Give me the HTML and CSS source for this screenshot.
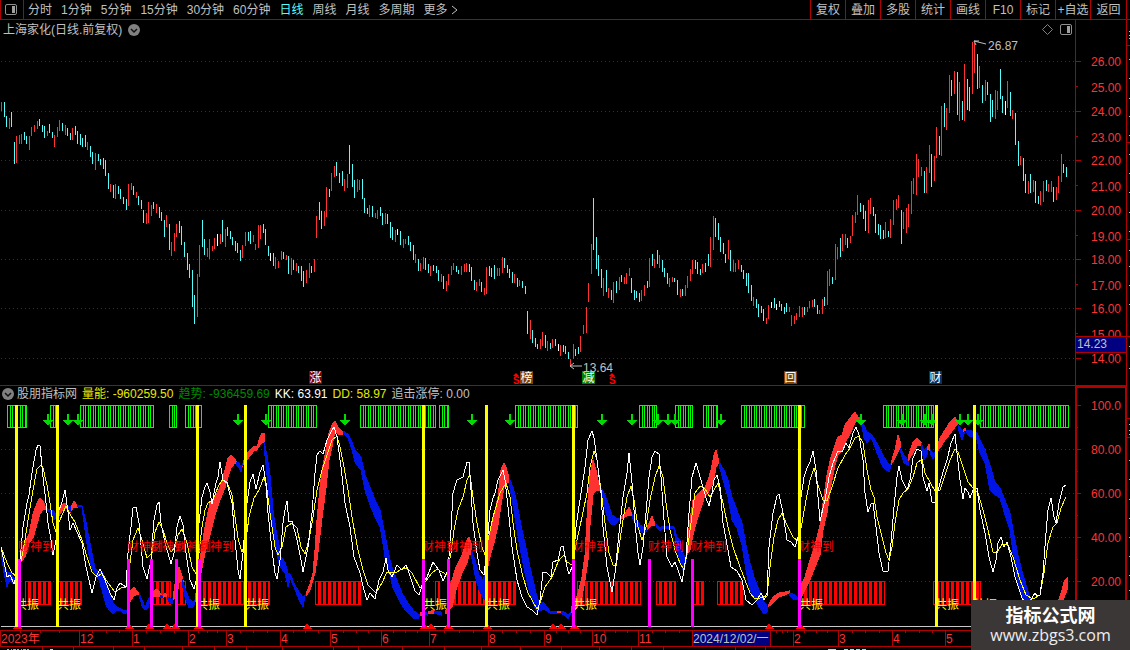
FILE: index.html
```html
<!DOCTYPE html>
<html lang="zh-CN">
<head>
<meta charset="utf-8">
<title>上海家化 日线</title>
<link rel="stylesheet" href="styles.css">
</head>
<body>
<div class="app">
  <header class="toolbar">
    <button class="layout-btn" aria-label="布局">
      <svg width="14" height="12" viewBox="0 0 14 12"><rect x="1.500" y=".5" width="11" height="10" rx="1.500" fill="none" stroke="#909090"/><rect x="8" y="2" width="3" height="7" fill="#a0a0a0"/></svg>
    </button>
    <nav class="periods">
      <button>分时</button><button>1分钟</button><button>5分钟</button><button>15分钟</button><button>30分钟</button><button>60分钟</button><button class="active">日线</button><button>周线</button><button>月线</button><button>多周期</button><button class="more">更多<svg width="7" height="10" viewBox="0 0 7 10"><path d="M1 1l5 4-5 4" fill="none" stroke="#c0c0c0"/></svg></button>
    </nav>
    <div class="tools">
      <button>复权</button><button>叠加</button><button>多股</button><button>统计</button><button>画线</button><button>F10</button><button>标记</button><button>+自选</button><button class="back">返回</button>
    </div>
  </header>
  <div class="body">
    <main class="charts">
      <div class="price-title">
        <div class="name">
          <span>上海家化(日线.前复权)</span>
          <button class="round" aria-label="展开"><svg width="12" height="12" viewBox="0 0 12 12"><circle cx="6" cy="6" r="6" fill="#808080"/><path d="M3 5l3 3 3-3" fill="none" stroke="#101010" stroke-width="1.5"/></svg></button>
        </div>
        <div class="marks">
          <svg width="11" height="11" viewBox="0 0 11 11"><path d="M5.500 .5l5 5-5 5-5-5z" fill="none" stroke="#808080"/></svg>
          <svg width="12" height="11" viewBox="0 0 12 11"><rect x=".5" y=".5" width="11" height="10" rx="1.500" fill="none" stroke="#909090"/><rect x="7" y="2" width="3" height="7" fill="#a0a0a0"/></svg>
        </div>
        <div class="axis-head"></div>
      </div>
      <svg id="price" class="plot" viewBox="0 39 1127 347"></svg>
      <div class="legend">
        <button class="round" aria-label="展开"><svg width="12" height="12" viewBox="0 0 12 12"><circle cx="6" cy="6" r="6" fill="#808080"/><path d="M3 5l3 3 3-3" fill="none" stroke="#101010" stroke-width="1.5"/></svg></button>
        <div class="values">
          <span class="c-gray">股朋指标网</span>
          <span class="c-yellow">量能: -960259.50</span>
          <span class="c-green">趋势: -936459.69</span>
          <span class="c-white">KK: 63.91</span>
          <span class="c-yellow">DD: 58.97</span>
          <span class="c-gray">追击涨停: 0.00</span>
        </div>
        <div class="axis-head thick"></div>
      </div>
      <svg id="osc" class="plot" viewBox="0 403 1127 227"></svg>
      <svg id="dates" class="plot" viewBox="0 630 1127 20"></svg>
    </main>
    <svg id="edge" class="edge" viewBox="1127 20 3 630"></svg>
  </div>
  <div class="site"><strong>指标公式网</strong><span>www.zbgs3.com</span></div>
</div>
<script src="chart.js"></script>
</body>
</html>
```
FILE: styles.css
```css
* { box-sizing: border-box; }
body {
  margin: 0;
  background: #000;
  color: #c0c0c0;
  font: 12px/16px "Liberation Sans", "Noto Sans CJK SC", sans-serif;
}
button {
  margin: 0;
  padding: 0;
  border: 0;
  background: none;
  color: inherit;
  font: inherit;
  white-space: nowrap;
}
svg { display: block; }
.app { position: relative; overflow: hidden; min-height: 100vh; }
.toolbar {
  display: flex;
  height: 20px;
  border-bottom: 1px solid #b00000;
  border-left: 1px solid #b00000;
}
.layout-btn { width: 23px; padding-left: 3px; border-right: 1px solid #b00000; }
.periods { display: flex; gap: 9px; padding-left: 4px; flex: 1; }
.periods .active { color: #54fcfc; }
.periods .more { display: flex; align-items: center; gap: 3px; }
.tools { display: flex; margin-right: 3px; border-right: 1px solid #b00000; }
.tools button { width: 35px; border-left: 1px solid #b00000; }
.tools .back { width: 36px; }
.body { display: grid; grid-template-columns: 1fr 3px; }
.price-title { display: flex; height: 19px; }
.name { display: flex; flex: 1; align-items: center; gap: 6px; padding-left: 3px; }
.marks { display: flex; align-items: center; gap: 7px; padding-right: 3px; }
.axis-head { width: 52px; border-left: 1px solid #b00000; border-right: 1px solid #b00000; }
.axis-head.thick { border-width: 2px; border-top: 2px solid #b00000; }
.round { width: 12px; height: 12px; }
.legend { display: flex; height: 17px; }
.legend .round { margin: 2px 3px 0 2px; }
.values { display: flex; flex: 1; gap: 5px; white-space: nowrap; }
.c-gray { color: #c0c0c0; }
.c-yellow { color: #e8e800; }
.c-green { color: #008a00; }
.c-white { color: #fff; }
.plot { width: 100%; height: auto; overflow: visible; }
.plot text { font-size: 12px; }
.edge { width: 3px; height: 630px; }
.crisp { shape-rendering: crispEdges; }
.site {
  position: absolute;
  right: 0;
  bottom: 0;
  display: flex;
  flex-direction: column;
  align-items: center;
  width: 159px;
  height: 50px;
  padding-top: 3px;
  background: #3c3737;
  color: #fff;
  font: 16px/20px "Open Sans", "Noto Sans CJK SC", sans-serif;
}
.site strong { font: bold 18px/22px "Noto Sans CJK SC", sans-serif; }
.site span { color: #eee; }
```
FILE: chart.js
```js
const RED = '#ff3232', CYAN = '#54fcfc', LINE = '#b00000';
const hline = (x1, x2, y, c, w = 1) => `<rect class="crisp" x="${x1}" y="${y}" width="${x2 - x1}" height="${w}" fill="${c}"/>`;
const vline = (x, y1, y2, c, w = 1) => `<rect class="crisp" x="${x}" y="${y1}" width="${w}" height="${y2 - y1}" fill="${c}"/>`;
const text = (x, y, s, c) => `<text x="${x}" y="${y}" fill="${c}">${s}</text>`;
const grid = y => `<path class="crisp" d="M1 ${y + 0.5}H1075" stroke="#a00000" stroke-dasharray="1 3"/>`;

/* Daily bars: x, high, low, direction (r up, c down, w flat) */
const bars = `1,102,111r 4,102,117c 6,116,127c 9,118,129r 11,112,127c 14,142,164c 16,136,163r 19,135,144r 21,134,144r 24,132,140c 26,136,144c 29,136,150r 31,127,136r 34,125,132r 37,121,129r 39,119,126c 42,125,132c 44,126,138c 47,131,136r 49,124,133c 52,132,138c 54,135,147r 57,127,137r 59,120,131r 62,123,131c 65,125,135r 67,128,136c 70,133,140c 72,128,140r 75,126,135c 77,131,144c 80,134,145c 82,138,147c 85,135,147c 87,142,150r 90,146,157c 92,152,164c 95,153,170r 98,154,161c 100,159,165c 103,158,169c 105,160,176c 108,173,189c 110,184,192r 113,185,198c 115,184,199r 118,186,194c 120,189,199c 123,197,204c 126,199,210c 128,184,206r 131,183,190r 133,186,195c 136,192,198r 138,196,205c 141,200,209c 143,210,223c 146,213,224r 148,202,223r 151,205,216r 153,202,209c 156,204,213r 159,207,218c 161,212,221c 164,220,237c 166,215,227r 169,224,250c 171,242,256r 174,233,251r 176,224,237r 179,221,233c 181,226,245c 184,242,257c 187,253,270c 189,264,278c 192,270,307c 194,295,324c 197,274,317r 199,245,277r 202,220,247c 204,239,255c 207,248,257r 209,239,259r 212,246,251r 214,238,249r 217,234,246w 220,234,244r 222,220,242c 225,229,247r 227,227,236c 230,231,239c 232,237,245c 235,241,251c 237,243,253c 240,250,261c 242,245,258r 245,232,246r 248,232,241c 250,231,244c 253,235,242r 255,244,250r 258,225,248r 260,225,239r 263,224,233c 265,229,245c 268,246,256c 270,253,261w 273,253,266c 275,257,269r 278,261,268r 281,251,260r 283,252,259c 286,255,260r 288,256,274c 291,258,275r 293,260,270c 296,263,271r 298,266,273c 301,266,281c 303,271,287c 306,270,283r 309,263,278r 311,266,273c 314,259,272r 316,216,238r 319,202,220c 321,211,229c 324,211,226r 326,187,217r
329,189,197c 331,173,191r 334,166,177r 336,162,176c 339,173,183c 342,171,186c 344,179,191r 347,174,188r 349,145,174c 352,164,187c 354,180,198c 357,179,192r 359,180,190r 362,179,199c 364,198,213c 367,208,214c 369,205,217r 372,206,217c 375,213,218r 377,210,219r 380,207,216c 382,213,225c 385,213,224r 387,214,224c 390,222,238c 392,227,240c 395,230,242r 397,229,235w 400,231,245c 403,239,248r 405,239,244r 408,236,245c 410,242,251c 413,245,260c 415,254,263r 418,259,271c 420,263,271r 423,257,269r 425,258,270c 428,264,273c 430,266,276r 433,265,271c 436,266,273c 438,270,281c 441,274,282r 443,276,289c 446,281,291r 448,274,285r 451,266,275r 453,263,270r 456,266,272c 458,270,274c 461,266,275r 464,264,272r 466,263,272r 469,264,272c 471,267,281c 474,280,290c 476,282,291r 479,279,286r 481,282,292c 484,288,295r 486,267,294r 489,266,276c 491,268,277c 494,265,279c 497,268,276r 499,268,276r 502,257,273r 504,258,268c 507,265,273c 509,269,278c 512,272,283c 514,274,283r 517,278,287c 519,280,286r 522,281,288c 525,286,294c 527,311,334c 530,320,339r 532,330,343c 535,338,347c 537,344,349c 540,339,349r 542,332,346r 545,335,348c 547,341,351r 550,343,349c 552,339,348r 555,339,346c 558,344,351w 560,345,356r 563,345,352c 565,346,354c 568,352,359c 570,359,366r 573,344,359r 575,349,356c 578,347,354c 580,336,352r 583,325,334r 586,307,333r 588,283,302r 591,244,274r 593,198,250c 596,237,269c 598,255,276c
601,269,288c 603,278,296r 606,270,292c 608,288,298r 611,290,300c 613,282,303r 616,281,293c 619,277,290r 621,275,282c 624,277,284r 626,273,284r 629,268,276r 631,278,293c 634,290,300c 636,291,298c 639,293,302c 641,290,301r 644,285,296r 647,281,288c 649,258,287r 652,254,266c 654,259,268r 657,250,264c 659,255,268r 662,260,272c 664,268,277c 667,273,284c 669,278,287r 672,277,282r 674,278,282c 677,280,295c 680,289,297r 682,289,296c 685,285,296r 687,276,288r 690,269,281r 692,260,274r 695,260,269c 697,262,274c 700,269,275c 702,264,273r 705,263,272c 708,254,266c 710,237,267r 713,216,250r 715,218,237c 718,223,240c 720,237,252c 723,243,254c 725,254,263c 728,240,259r 730,250,271c 733,260,272r 735,263,272r 738,260,269r 741,265,272c 743,270,279c 746,273,286c 748,273,293c 751,285,301c 753,297,306r 756,299,308c 758,304,317c 761,306,313c 763,309,321c 766,318,324r 768,305,319r 771,302,308w 774,298,308c 776,304,310w 779,301,307c 781,304,311c 784,307,314c 786,303,312c 789,307,312r 791,315,326r 794,316,324r 796,313,320r 799,306,317r 802,307,317r 804,307,315c 807,307,312r 809,301,308r 812,300,307r 814,299,307c 817,305,314c 819,310,314r 822,299,314r 824,297,306c 827,271,305r 829,269,286r 832,277,284c 835,244,280r 837,247,259r 840,238,257c 842,234,251r 845,234,245r 847,238,248c 850,236,243r 852,215,236r
855,212,223r 857,195,215r 860,203,212c 863,205,219c 865,211,231c 868,200,233r 870,198,214r 873,207,216c 875,214,233c 878,224,235c 880,225,239c 883,230,239c 885,222,238r 888,231,237c 890,219,238r 893,200,225r 896,199,210r 898,195,208r 901,210,244c 903,212,229r 906,208,233r 908,204,227r 911,181,214r 913,178,194r 916,154,195r 918,159,177r 921,167,176r 924,171,193c 926,167,193r 929,145,173r 931,154,187c 934,156,181r 936,127,158r 939,136,155c 941,106,156r 944,103,127c 946,108,130r 949,75,113r 951,80,96c 954,71,94r 957,72,115c 959,82,121r 962,101,120c 964,64,121r 967,79,110c 969,87,111c 972,42,94r 974,43,73r 977,54,89c 979,66,88r 982,85,103c 985,80,101r 987,82,95c 990,94,122c 992,100,117c 995,90,119r 997,91,110r 1000,69,99c 1002,96,113c 1005,101,115w 1007,81,108r 1010,92,116c 1012,110,119r 1015,113,145c 1018,141,166c 1020,156,165r 1023,158,181c 1025,174,193c 1028,181,194r 1030,174,193c 1033,180,192r 1035,181,203c 1038,196,204c 1040,191,205r 1043,181,202r 1046,180,191c 1048,184,192r 1051,181,192r 1053,187,202c 1056,187,200r 1058,176,193r 1061,154,182r 1063,164,173c 1066,167,177c`;

let p = [61, 111, 160, 210, 259, 308, 358].map(grid).join('');
for (const b of bars.split(/\s+/)) {
  const [x, hi, lo] = b.slice(0, -1).split(',').map(Number);
  p += vline(x, hi, lo, { r: RED, c: CYAN, w: '#fff' }[b.slice(-1)]);
}
const flag = (x, c, s) => `<rect class="crisp" x="${x}" y="371" width="13" height="13" fill="${c}"/><text x="${x + 0.5}" y="382" fill="#fff">${s}</text>`;
p += flag(309, '#800000', '涨') + flag(520, '#804000', '榜') + flag(582, '#008000', '减') + flag(784, '#804000', '回') + flag(929, '#003366', '财');
for (const x of [516, 612]) p += `<path d="M${x - 3} 376l3-3 3 3z" fill="red"/><text x="${x - 3}" y="384" fill="red" font-weight="bold" style="font-size:10px">S</text>`;
p += '<path d="M974 41l12 3M974 41h5M974 41l2 4M570 366h12M574 363l-4 3 4 3" fill="none" stroke="#c0c0c0"/>';
p += text(988, 50, '26.87', '#c0c0c0') + text(583, 372, '13.64', '#c0c0c0');
p += vline(1075, 39, 386, LINE) + vline(1126, 39, 386, LINE);
[61, 87, 111, 137, 160, 186, 210, 236, 259, 285, 308, 334, 358].forEach((y, i) => {
  const ty = i % 2 ? y - 1 : y;
  p += hline(1076, i % 2 ? 1078 : 1081, ty, LINE) + text(1091, y + 5, (26 - i).toFixed(2), RED);
});
p += '<rect class="crisp" x="1076" y="336" width="50" height="17" fill="#000080"/>' + hline(1076, 1126, 336, LINE) + hline(1076, 1126, 352, LINE) + text(1077, 348, '14.23', '#c0c0c0');
p += hline(0, 1127, 385, LINE);
document.getElementById('price').innerHTML = p;

/* Trend ribbon: x, upper, lower */
const ribbon = [
  ['b', '1,547,553 4,563,573 7,572,587 10,572,578 12,575,583 15,580,584'],
  ['r', '19,567,570 21,553,562 25,542,557 29,534,543 33,514,538 37,503,524 40,498,514 43,501,510 46,508,509'],
  ['b', '46,508,510 50,510,512 53,510,519 55,513,519 57,514,516'],
  ['r', '59,510,516 62,505,511 65,503,508 67,505,508'], ['b', '67,506,508 70,508,513 72,505,507'],
  ['r', '71,507,511 74,501,507 77,505,507'],
  ['b', '77,505,506 82,506,507 84,514,522 86,522,537 88,533,550 91,548,565 95,568,575 99,572,580 102,572,590 106,582,605 110,593,611 113,603,614 117,607,610 121,609,611 124,611,614 127,610,612'],
  ['r', '128,600,606 131,590,600 134,587,596 137,591,594 139,593,594'],
  ['b', '139,593,595 142,600,606 145,607,610 148,600,608 150,597,600'],
  ['r', '151,593,597 154,591,596 157,589,596 160,593,597 162,596,597'],
  ['b', '160,595,597 163,597,598'], ['r', '163,596,598 165,593,596 167,596,597'], ['b', '167,596,597 169,598,602 172,600,604 173,598,600'],
  ['r', '173,597,600 177,572,596 179,567,583 181,573,581 183,580,582'],
  ['b', '182,579,583 185,588,597 189,599,608 193,602,607 195,600,602'],
  ['r', '195,600,602 198,580,590 201,553,573 205,527,553 210,503,535 215,497,515 220,487,500 225,470,488 228,458,477 231,455,468 235,459,463 237,463,464'],
  ['b', '236,462,464 239,463,468 241,467,472 243,463,464'],
  ['r', '243,463,465 246,454,461 250,450,456 254,446,451 257,447,450 260,437,445 262,433,442 264,433,442'],
  ['b', '264,442,446 267,455,475 270,475,505 273,510,533 276,530,550 279,545,563 281,557,568 285,562,573 288,573,587 290,574,578 294,583,587 299,592,600 303,597,607 305,595,596'],
  ['r', '306,594,596 310,584,590 313,573,580 315,550,573 317,520,560 320,487,535 323,465,510 326,450,488 329,433,460 332,425,447 335,421,430 338,427,434 342,431,434'],
  ['b', '343,431,433 348,434,438 352,442,450 355,450,462 361,457,470 365,475,490 370,487,505 375,500,517 380,510,527 382,520,537 385,535,557 390,560,575 393,570,588 398,583,598 403,595,607 408,603,613 413,610,618 418,614,619 420,614,615'],
  ['r', '420,613,616 423,612,615'], ['b', '423,612,614 427,613,615'], ['r', '428,612,614 434,610,613'], ['b', '434,611,613 441,612,615'], ['r', '445,611,614 448,608,612'],
  ['r', '449,590,610 452,580,607 456,567,590 462,555,573 467,540,563 469,537,554 471,543,554'],
  ['b', '471,550,553 475,560,575 479,575,590 483,580,598 486,570,600'],
  ['r', '487,553,570 490,532,557 494,515,543 498,497,525 501,470,505 504,463,487 506,467,482 509,478,482'],
  ['b', '509,478,482 513,487,505 517,503,530 521,525,553 525,543,573 529,562,590 533,580,603 536,593,610 539,602,611 544,603,609 550,611,613 558,611,613'],
  ['r', '557,611,613 563,611,612'], ['b', '561,611,613 564,612,615 568,615,619 570,613,615'],
  ['r', '571,608,613 574,604,612 578,593,605 582,577,597 585,555,580 588,500,560 590,475,525 593,460,495 596,470,490 599,485,490'],
  ['b', '600,486,488 604,493,505 608,503,520 612,515,525 616,518,524 619,518,520'],
  ['r', '620,517,519 625,514,517 629,507,515 632,514,516'],
  ['b', '632,514,516 636,519,526 640,525,531 643,527,533 646,530,532'],
  ['r', '647,528,530 652,516,525 655,524,525'],
  ['b', '655,523,525 660,528,531 663,526,528 666,526,528 674,527,529 677,537,550 680,540,560 683,553,570 685,557,567 687,553,555'],
  ['r', '687,545,555 690,520,550 693,500,535 697,495,520 702,490,505 705,487,495 708,480,493 711,470,487 714,455,480 716,450,467 719,462,463'],
  ['b', '719,462,465 724,470,483 728,480,497 732,497,520 737,510,528 742,523,545 746,545,570 750,563,590 755,580,600 760,592,608 764,602,614 767,606,612'],
  ['r', '768,606,607 773,597,603 779,593,597 785,592,595 789,591,593'],
  ['b', '789,593,595 793,594,599 797,597,599'],
  ['r', '800,588,600 805,577,590 810,560,580 815,545,567 820,525,555 823,503,530 827,475,513 831,457,485 835,445,465 838,437,455 842,435,450 845,425,443 850,418,434 855,412,423 858,417,420 861,419,421'],
  ['b', '861,419,421 864,425,438 867,432,443 871,434,437 875,440,447 879,447,458 883,455,467 889,465,472 891,463,465'],
  ['r', '891,463,465 895,450,458 898,435,452 900,441,448'], ['b', '900,448,450 904,455,463 908,460,465'],
  ['r', '908,457,461 913,442,453 917,438,446 921,442,445'], ['b', '921,443,447 924,450,460 927,447,455'],
  ['r', '927,448,450 929,444,449 930,449,451'], ['b', '930,449,453 933,454,459 936,452,453'],
  ['r', '936,450,453 940,438,448 945,430,440 950,422,434 955,417,427 958,422,424'],
  ['b', '958,425,428 962,430,440 964,432,434'], ['r', '963,430,432 965,428,430 966,430,431'],
  ['b', '966,430,432 970,430,437 973,432,436 977,433,440 980,440,453 985,450,463 990,465,490 995,482,495 1000,488,498 1005,500,515 1010,513,530 1014,535,560 1018,555,583 1023,575,600 1030,598,605'],
  ['r', '1058,602,603 1062,590,602 1064,582,598 1067,578,590']
];

const kk = '1,547 7,577 10,575 14,584 20,560 23,527 27,503 29,495 32,473 36,450 38,445 40,446 43,477 46,503 48,523 51,540 53,555 56,540 58,513 62,502 65,490 68,512 70,530 73,523 77,532 82,543 86,567 92,593 96,577 100,569 105,580 110,593 114,600 117,588 120,583 126,587 128,553 131,527 133,508 136,507 139,523 143,567 147,579 151,560 154,520 157,505 159,502 161,523 165,543 168,553 171,564 174,553 177,527 180,516 183,525 186,553 190,580 194,589 197,577 199,523 202,497 205,487 207,483 210,492 212,504 216,483 218,477 220,462 223,480 227,483 232,503 235,540 238,570 240,579 243,553 247,503 250,482 253,474 256,489 260,472 263,465 266,483 268,513 272,550 275,573 277,579 280,560 283,523 285,510 287,501 289,522 292,521 297,540 301,560 303,572 308,547 312,513 315,473 317,455 320,451 323,454 327,440 331,432 334,427 337,437 341,467 345,503 350,527 354,557 360,573 364,590 367,600 370,593 375,599 379,580 383,572 386,558 388,570 392,577 397,565 402,570 406,565 408,570 412,582 415,591 419,595 423,583 427,577 433,562 439,570 443,581 448,570 451,530 453,493 457,480 463,477 467,462 469,462 471,490 473,523 477,553 480,570 484,575 487,547 490,510 493,498 495,493 498,480 503,470 505,480 508,507 512,547 517,580 522,597 527,607 532,610 537,615 540,600 543,572 547,573 551,577 553,562 558,560 561,547 563,546 567,567 569,574 573,565 576,527 578,513 582,487 585,467 588,440 592,431 594,438 597,460 601,493 603,527 607,567 612,592 615,573 619,533 623,497 627,473 629,453 632,483 635,523 638,553 640,565 643,547 646,513 649,477 652,457 655,451 659,454 661,477 664,520 667,557 672,567 675,562 678,570 682,582 686,557 689,513 692,477 696,463 699,473 703,487 706,498 709,506 712,493 714,480 717,475 720,487 723,523 728,550 731,567 737,571 742,580 746,600 752,605 757,600 761,593 764,600 767,593 769,547 773,513 777,496 779,494 783,513 787,540 791,542 795,547 798,537 801,497 804,477 807,468 810,462 813,451 816,470 818,497 820,521 825,500 829,477 833,463 838,451 842,452 846,443 849,448 853,433 856,427 859,435 863,460 865,493 868,512 871,504 873,503 876,527 879,553 883,571 888,571 891,543 894,507 897,477 899,466 902,480 907,490 910,480 913,458 917,449 921,451 923,477 927,491 929,483 932,502 935,502 939,487 943,472 947,460 951,443 955,434 957,453 960,480 963,499 965,488 968,492 970,498 973,490 977,488 980,510 985,533 989,557 993,572 996,560 998,543 1001,537 1004,547 1007,542 1011,557 1015,577 1022,598 1027,606 1035,593 1037,596 1040,595 1043,573 1046,533 1048,510 1051,498 1054,517 1056,523 1059,503 1063,487 1066,485';
const dd = '1,547 7,563 12,573 16,576 20,567 25,540 28,520 33,490 37,469 41,465 43,468 47,485 50,503 53,523 56,532 59,522 66,506 71,516 75,522 82,540 87,557 92,572 97,577 102,573 108,583 115,592 121,588 126,587 130,563 133,540 138,528 142,540 147,558 152,553 155,532 159,522 163,530 167,543 171,552 175,547 178,535 182,529 187,543 192,567 196,574 199,553 202,527 205,510 208,503 213,500 218,487 222,480 227,482 232,495 235,517 238,538 242,552 246,540 249,517 254,498 259,490 264,477 267,490 271,520 275,547 278,555 282,547 286,527 292,523 297,528 301,547 305,554 309,540 313,517 317,490 322,470 327,455 332,440 337,436 340,447 344,467 348,490 353,523 358,550 363,570 368,585 376,593 382,583 387,572 395,573 402,569 407,568 412,573 420,588 425,582 432,573 437,569 447,575 451,553 454,530 458,510 463,497 467,480 470,475 473,497 477,523 482,547 485,555 488,540 493,517 500,493 506,483 510,497 513,523 517,550 523,577 528,593 537,609 540,603 545,587 552,577 558,562 561,558 564,555 567,562 572,565 577,540 582,517 587,493 590,467 594,451 597,460 601,490 605,523 609,553 613,565 616,566 619,547 623,520 627,497 631,486 634,500 638,527 642,540 646,527 650,500 655,477 659,466 663,477 666,503 670,530 675,550 680,563 684,570 687,553 691,523 695,493 700,486 705,489 710,497 714,490 718,483 723,503 728,527 733,547 740,567 745,580 750,593 755,599 760,598 767,596 770,567 774,537 778,520 782,513 787,525 793,537 798,541 802,523 806,500 810,480 814,468 818,485 823,500 827,501 832,487 838,468 845,455 850,448 855,438 859,436 863,443 867,470 871,490 874,497 877,517 882,537 886,553 889,560 892,547 895,523 899,500 903,493 908,489 913,477 917,463 922,459 925,473 930,482 935,491 940,490 945,475 950,460 955,449 958,452 963,467 968,482 973,488 978,493 983,510 988,530 993,552 997,553 1002,544 1008,545 1013,557 1020,580 1026,595 1033,599 1040,595 1044,573 1048,543 1053,527 1057,523 1061,508 1066,497';

const hatch = (x1, x2, y1, y2, c, wide) => {
  let s = `<rect class="crisp" x="${x1 + 0.5}" y="${y1 + 0.5}" width="${x2 - x1 - 1}" height="${y2 - y1 - 1}" fill="none" stroke="${c}"/>`;
  for (let i = 1; x1 + i * 2.5 < x2 - 2; i++) s += vline(Math.round(x1 + i * 2.5), y1, y2, c, wide && i % 2 ? 2 : 1);
  return s;
};
let o = [449, 493, 537, 581].map(grid).join('');
for (const [a, b] of [[7, 27], [50, 58], [80, 154], [169, 177], [185, 202], [268, 317], [360, 436], [439, 449], [515, 578], [639, 657], [675, 693], [703, 718], [741, 805], [883, 934], [980, 1069]]) o += hatch(a, b, 405, 428, '#00ff00', false);
for (const [a, b] of [[25, 51], [57, 82], [153, 171], [177, 186], [200, 270], [315, 361], [435, 440], [450, 516], [577, 641], [656, 676], [693, 704], [717, 743], [801, 885], [933, 981]]) o += hatch(a, b, 581, 605, '#ff0000', true);
for (const [kind, data] of ribbon) {
  const q = data.split(' ').map(s => s.split(',').map(Number));
  const top = q.map(v => `${v[0]},${v[1]}`), low = q.map(v => `${v[0]},${v[2]}`).reverse();
  const c = kind === 'r' ? RED : '#0014e6';
  o += `<polygon class="crisp" points="${top.concat(low).join(' ')}" fill="${c}" stroke="${c}"/>`;
}
for (const x of [48, 68, 78, 238, 266, 345, 472, 510, 602, 632, 658, 668, 675, 721, 861, 902, 925, 932, 960, 968, 978])
  o += `<path class="crisp" d="M${x - 1} 414h2v6h4l-5 6-5-6h4z" fill="#00dc00"/>`;
o += `<polyline class="crisp" points="${dd}" fill="none" stroke="#ffff00"/><polyline class="crisp" points="${kk}" fill="none" stroke="#fff"/>`;
for (const x of [18, 127, 150, 175, 198, 422, 447, 572, 648, 691, 798]) o += text(x, 551, '财神到', '#ff0000');
for (const x of [15, 57, 196, 245, 423, 486, 573, 799, 935, 973]) o += text(x, 609, '共振', '#ffff00');
o += hline(1, 1075, 626, '#c8c8c8');
for (const x of [17, 129, 149, 167, 175, 198, 307, 424, 431, 448, 487, 553, 561, 574, 769, 800]) o += `<path class="crisp" d="M${x - 5} 629l3-3 2-3 2 3 3 3z" fill="#ff0000"/>`;
for (const x of [15, 56, 196, 244, 422, 485, 572, 798, 935, 973]) o += vline(x, 405, 627, '#ffff00', 3);
for (const x of [18, 127, 150, 175, 198, 422, 447, 572, 648, 691, 798]) o += vline(x, 559, 627, '#ff00ff', 3);
o += vline(1075, 403, 630, LINE, 2) + vline(1125, 403, 630, LINE, 2);
[[405, '100.0'], [449, '80.00'], [493, '60.00'], [537, '40.00'], [581, '20.00']].forEach(([y, s]) => {
  o += hline(1077, 1081, y, LINE) + text(1091, y + 5, s, RED);
  if (y < 581) o += hline(1077, 1078, y + 22, LINE);
});
document.getElementById('osc').innerHTML = o;

let d = hline(0, 1127, 630, LINE) + hline(0, 1127, 646, LINE) + vline(0, 630, 647, LINE);
const months = [[79, '12'], [132, '1'], [188, '2'], [226, '3'], [280, '4'], [330, '5'], [381, '6'], [429, '7'], [488, '8'], [544, '9'], [592, '10'], [638, '11'], [692, ''], [770, ''], [793, '2'], [838, '3'], [892, '4'], [945, '5']];
months.forEach(([x, s], i) => {
  d += vline(x, 630, 647, LINE) + text(x + 1, 643, s, RED);
  const prev = i ? months[i - 1][0] : 0;
  for (let k = 1; k < 4; k++) d += vline(Math.round(prev + (x - prev) * k / 4), 631, 633, LINE);
});
d += text(1, 643, '2023年', RED);
d += '<rect class="crisp" x="693" y="631" width="77" height="15" fill="#000080"/>' + text(693, 643, '2024/12/02/一', '#c0c0c0');
for (const x of [42, 73, 113, 144, 182, 214, 246, 282, 333, 358, 402, 444, 481, 520, 561, 599, 631, 663, 735, 765]) d += vline(x, 647, 650, LINE);
d += '<path class="crisp" d="M7 649.500H29" stroke="#aaa" stroke-dasharray="2 2 1 1 3 1"/><path class="crisp" d="M50 649.500h3M828 649.500h8" stroke="#ccc"/><path class="crisp" d="M844 649.500h22" stroke="#54fcfc" stroke-dasharray="4 2"/>';
document.getElementById('dates').innerHTML = d;

let e = [45, 142, 239, 336, 418, 437].map(y => hline(1127, 1130, y, LINE)).join('');
for (const y of [31, 35, 38, 59, 78, 98, 116, 135, 154, 173, 192, 212, 231, 250, 266, 285, 304, 346, 368, 424, 430, 434, 460, 479, 499, 518, 537, 556, 575, 590]) e += hline(1129, 1130, y, '#c0c0c0');
document.getElementById('edge').innerHTML = e;
```
